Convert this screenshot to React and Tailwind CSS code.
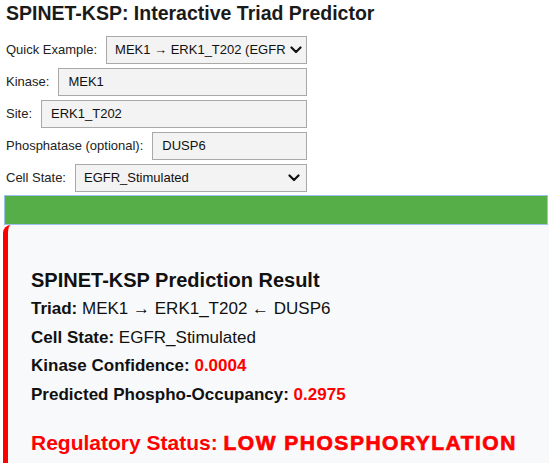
import React from "react";

const Chevron = () => (
  <svg width="12" height="8" viewBox="0 0 12 8" className="shrink-0">
    <path d="M1.5 1.5 L6 6 L10.5 1.5" fill="none" stroke="#111" strokeWidth="2.2" strokeLinecap="round" strokeLinejoin="round" />
  </svg>
);

function Row({ label, children }) {
  return (
    <div className="flex items-center h-[28px] gap-[9px]">
      <span className="whitespace-nowrap text-[13px] text-[#222]">{label}</span>
      {children}
    </div>
  );
}

function Input({ value }) {
  return (
    <div className="flex-1 h-[28px] border border-[#a9a9a9] bg-[#f3f3f3] px-[9px] flex items-center text-[13px] text-[#111]">
      {value}
    </div>
  );
}

function Select({ value }) {
  return (
    <div className="flex-1 min-w-0 h-[28px] border border-[#a9a9a9] bg-[#f3f3f3] pl-[8px] pr-[6px] flex items-center justify-between gap-[4px] text-[13px] text-[#111]">
      <span className="whitespace-nowrap">{value}</span>
      <Chevron />
    </div>
  );
}

export default function App() {
  return (
    <div className="w-[550px] h-[467px] overflow-hidden bg-white font-['Liberation_Sans',Arial,sans-serif] pl-[3px] pt-[1px]">
      <h1 className="ml-[3px] text-[19.5px] leading-[24px] font-bold text-[#1a1a1a]">
        SPINET-KSP: Interactive Triad Predictor
      </h1>
      <div className="ml-[3px] mt-[11px] w-[301px] flex flex-col gap-[4px]">
        <Row label="Quick Example:">
          <Select value="MEK1 → ERK1_T202 (EGFR" />
        </Row>
        <Row label="Kinase:">
          <Input value="MEK1" />
        </Row>
        <Row label="Site:">
          <Input value="ERK1_T202" />
        </Row>
        <Row label="Phosphatase (optional):">
          <Input value="DUSP6" />
        </Row>
        <Row label="Cell State:">
          <Select value="EGFR_Stimulated" />
        </Row>
      </div>
      <div className="mt-[3px] ml-[1px] mr-[2px] h-[30px] bg-[#55ae47] border border-[#9cc4ea]" />
      <div className="mr-[1px] h-[238px] bg-[#f8f9fa] border-l-[5px] border-[#ff0000] rounded-tl-[8px] pl-[23px] pt-[43px] text-[#111]">
        <h3 className="text-[20px] leading-[24px] font-bold">SPINET-KSP Prediction Result</h3>
        <div className="mt-[3px] text-[17px] leading-[28.5px]">
          <p><b>Triad:</b> MEK1 → ERK1_T202 ← DUSP6</p>
          <p><b>Cell State:</b> EGFR_Stimulated</p>
          <p><b>Kinase Confidence: <span className="text-[#ff0000]">0.0004</span></b></p>
          <p><b>Predicted Phospho-Occupancy: <span className="text-[#ff0000]">0.2975</span></b></p>
        </div>
        <p className="mt-[20px] text-[21px] leading-[28px] font-bold text-[#ff0000]">
          Regulatory Status:{" "}
          <span className="tracking-[1.5px] [-webkit-text-stroke:0.7px_#ff0000]">LOW PHOSPHORYLATION</span>
        </p>
      </div>
    </div>
  );
}
